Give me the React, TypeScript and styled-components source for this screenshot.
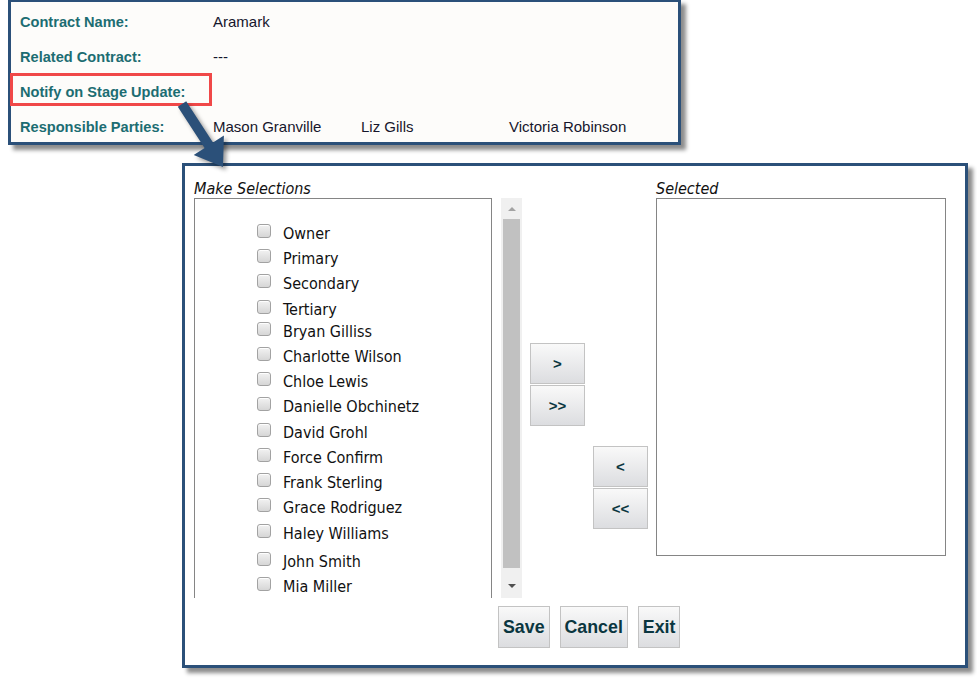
import React from "react";
import styled, { createGlobalStyle } from "styled-components";

const GlobalStyle = createGlobalStyle`
  html, body { margin: 0; padding: 0; background: #ffffff; }
  body { font-family: "Liberation Sans", Arial, sans-serif; }
`;

const navy = "#2b5079";
const teal = "#1c6d72";
const btnText = "#0a3640";
const listFont = `"DejaVu Sans Condensed", "DejaVu Sans", Tahoma, sans-serif`;

const Page = styled.div`
  position: relative;
  width: 977px;
  height: 678px;
  overflow: hidden;
  display: flex;
  flex-direction: column;
  align-items: flex-start;
`;

const InfoCard = styled.section`
  box-sizing: border-box;
  margin: -1px 0 0 8px;
  width: 673px;
  height: 146px;
  background: #fdfcfa;
  border: 3px solid ${navy};
  box-shadow: 5px 5px 4px rgba(0, 0, 0, 0.45);
  padding: 2px 0 0 9px;
  display: grid;
  grid-template-columns: 193px 148px 148px 148px;
  grid-auto-rows: 35px;
`;

const FieldLabel = styled.div<{ $flagged?: boolean }>`
  grid-column: 1;
  position: relative;
  display: flex;
  align-items: center;
  font-size: 14.6px;
  font-weight: bold;
  color: ${teal};
  white-space: nowrap;
  &::after {
    content: "";
    display: ${(p) => (p.$flagged ? "block" : "none")};
    position: absolute;
    left: -10px;
    right: 1px;
    top: -1px;
    bottom: 3px;
    border: 3px solid #f04848;
  }
`;

const FieldValue = styled.div<{ $span?: number }>`
  grid-column: span ${(p) => p.$span ?? 1};
  display: flex;
  align-items: center;
  font-size: 15px;
  color: #16162c;
  white-space: nowrap;
`;

const Dialog = styled.section`
  box-sizing: border-box;
  margin: 18px 0 0 182px;
  width: 786px;
  height: 505px;
  background: #ffffff;
  border: 3px solid ${navy};
  box-shadow: 5px 5px 4px rgba(0, 0, 0, 0.45);
  padding: 12px 0 0 9px;
  display: flex;
  flex-direction: column;
`;

const Body = styled.div`
  display: flex;
  align-items: flex-start;
  gap: 8px;
`;

const Column = styled.div`
  display: flex;
  flex-direction: column;
`;

const PaneTitle = styled.div`
  height: 20px;
  line-height: 21px;
  font-family: ${listFont};
  font-size: 16px;
  font-style: italic;
  color: #111;
`;

const ListRow = styled.div`
  display: flex;
  gap: 9px;
`;

const ListBox = styled.div`
  box-sizing: border-box;
  width: 298px;
  height: 400px;
  border: 1px solid #858585;
  border-bottom: none;
  overflow: hidden;
  padding: 22px 0 0 62px;
  display: flex;
  flex-direction: column;
`;

const Option = styled.label<{ $shift: number }>`
  height: 25px;
  margin-top: ${(p) => p.$shift}px;
  flex: none;
  display: flex;
  align-items: center;
  gap: 12px;
  font-family: ${listFont};
  font-size: 16px;
  color: #111;
  white-space: nowrap;
`;

const Check = styled.span`
  box-sizing: border-box;
  width: 14px;
  height: 14px;
  margin-bottom: 6px;
  border: 1px solid #a2a2a2;
  border-radius: 3px;
  background: linear-gradient(#f2f2f2, #d6d6d6);
  box-shadow: inset 0 1px 0 rgba(255, 255, 255, 0.9);
  flex: none;
`;

const Scrollbar = styled.div`
  width: 21px;
  height: 400px;
  background: #f0f0f0;
  display: flex;
  flex-direction: column;
  align-items: center;
`;

const ScrollEnd = styled.div<{ $size: number }>`
  height: ${(p) => p.$size}px;
  width: 100%;
  display: flex;
  align-items: center;
  justify-content: center;
`;

const UpTri = styled.span`
  width: 0;
  height: 0;
  border-left: 4px solid transparent;
  border-right: 4px solid transparent;
  border-bottom: 4px solid #a3a3a3;
`;

const DownTri = styled.span`
  width: 0;
  height: 0;
  margin-top: 6px;
  border-left: 4px solid transparent;
  border-right: 4px solid transparent;
  border-top: 4px solid #505050;
`;

const Thumb = styled.div`
  width: 17px;
  flex: 1;
  background: #c1c1c1;
`;

const TransferGroup = styled.div<{ $top: number }>`
  margin-top: ${(p) => p.$top}px;
  display: flex;
  flex-direction: column;
  gap: 1px;
`;

const GreyButton = styled.button`
  box-sizing: border-box;
  border: 1px solid #c3c3c3;
  border-radius: 0;
  background: linear-gradient(#f9f9f9, #dcdde0);
  color: ${btnText};
  font-family: "Liberation Sans", Arial, sans-serif;
  font-weight: bold;
  margin: 0;
  cursor: pointer;
`;

const TransferButton = styled(GreyButton)`
  width: 55px;
  height: 41px;
  padding: 0;
  font-size: 15px;
`;

const SelectedBox = styled.div`
  box-sizing: border-box;
  width: 290px;
  height: 358px;
  border: 1px solid #858585;
`;

const Footer = styled.div`
  margin-top: 8px;
  padding-left: 304px;
  display: flex;
  gap: 10px;
`;

const ActionButton = styled(GreyButton)`
  height: 42px;
  padding: 0 4px;
  font-size: 17.8px;
`;

const Pointer = styled.svg`
  position: absolute;
  left: 170px;
  top: 95px;
  width: 70px;
  height: 85px;
  overflow: visible;
  filter: drop-shadow(3px 3px 2px rgba(0, 0, 0, 0.4));
`;

const people: { name: string; shift: number }[] = [
  { name: "Owner", shift: 0 },
  { name: "Primary", shift: 0 },
  { name: "Secondary", shift: 0 },
  { name: "Tertiary", shift: 1 },
  { name: "Bryan Gilliss", shift: -3 },
  { name: "Charlotte Wilson", shift: 0 },
  { name: "Chloe Lewis", shift: 0 },
  { name: "Danielle Obchinetz", shift: 0 },
  { name: "David Grohl", shift: 1 },
  { name: "Force Confirm", shift: 0 },
  { name: "Frank Sterling", shift: 0 },
  { name: "Grace Rodriguez", shift: 0 },
  { name: "Haley Williams", shift: 1 },
  { name: "John Smith", shift: 3 },
  { name: "Mia Miller", shift: 0 },
];

export default function App() {
  return (
    <Page>
      <GlobalStyle />
      <InfoCard>
        <FieldLabel>Contract Name:</FieldLabel>
        <FieldValue $span={3}>Aramark</FieldValue>
        <FieldLabel>Related Contract:</FieldLabel>
        <FieldValue $span={3}>---</FieldValue>
        <FieldLabel $flagged>Notify on Stage Update:</FieldLabel>
        <FieldValue $span={3} />
        <FieldLabel>Responsible Parties:</FieldLabel>
        <FieldValue>Mason Granville</FieldValue>
        <FieldValue>Liz Gills</FieldValue>
        <FieldValue>Victoria Robinson</FieldValue>
      </InfoCard>

      <Dialog>
        <Body>
          <Column>
            <PaneTitle>Make Selections</PaneTitle>
            <ListRow>
              <ListBox>
                {people.map((p) => (
                  <Option key={p.name} $shift={p.shift}>
                    <Check />
                    {p.name}
                  </Option>
                ))}
              </ListBox>
              <Scrollbar>
                <ScrollEnd $size={21}>
                  <UpTri />
                </ScrollEnd>
                <Thumb />
                <ScrollEnd $size={30}>
                  <DownTri />
                </ScrollEnd>
              </Scrollbar>
            </ListRow>
          </Column>
          <TransferGroup $top={165}>
            <TransferButton>&gt;</TransferButton>
            <TransferButton>&gt;&gt;</TransferButton>
          </TransferGroup>
          <TransferGroup $top={268}>
            <TransferButton>&lt;</TransferButton>
            <TransferButton>&lt;&lt;</TransferButton>
          </TransferGroup>
          <Column>
            <PaneTitle>Selected</PaneTitle>
            <SelectedBox />
          </Column>
        </Body>
        <Footer>
          <ActionButton>Save</ActionButton>
          <ActionButton>Cancel</ActionButton>
          <ActionButton>Exit</ActionButton>
        </Footer>
      </Dialog>

      <Pointer viewBox="0 0 70 85">
        <polygon
          points="16.2,6.3 43,47.5 53.9,40.4 53,72 23.7,60 34.6,52.9 7.8,11.7"
          fill={navy}
        />
      </Pointer>
    </Page>
  );
}
